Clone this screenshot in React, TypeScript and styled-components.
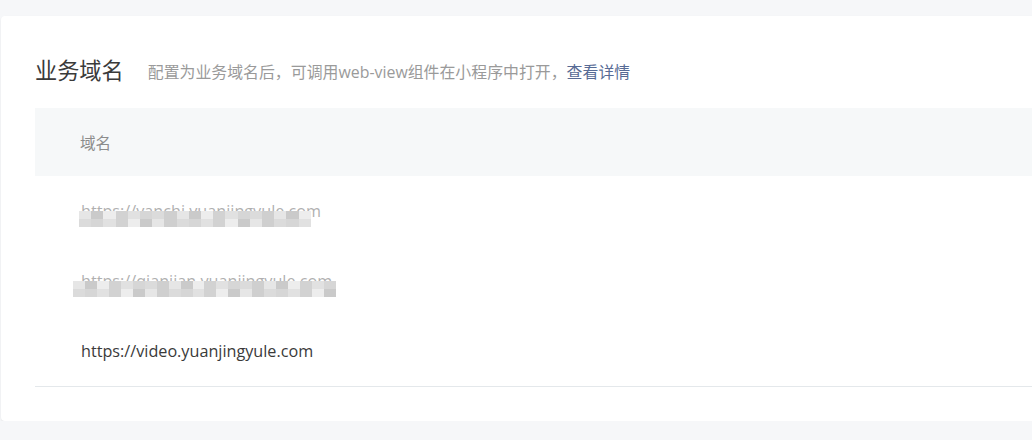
import styled, { createGlobalStyle } from 'styled-components';

const GlobalStyle = createGlobalStyle`
  html, body {
    margin: 0;
    padding: 0;
    background: #f6f7f9;
    overflow: hidden;
  }
  body {
    font-family: "Open Sans", "Noto Sans CJK SC", sans-serif;
    color: #353535;
  }
`;

const Page = styled.div`
  padding: 16px 0 0 1px;
  width: 1100px;
`;

const Card = styled.section`
  background: #fff;
  border-radius: 4px;
  box-shadow: 0 1px 2px rgba(0, 0, 0, 0.08);
  padding: 38px 0 34px 34px;
`;

const Heading = styled.div`
  display: flex;
  align-items: center;
  gap: 24px;
  height: 30px;
`;

const Title = styled.h2`
  margin: 0;
  font-family: "Noto Sans CJK SC", sans-serif;
  font-weight: 400;
  font-size: 22.2px;
  line-height: 30px;
  color: #3a3a3a;
`;

const Tip = styled.p`
  margin: 4px 0 0;
  font-family: "Open Sans", "Noto Sans CJK SC", sans-serif;
  font-size: 15.9px;
  color: #9a9a9a;
`;

const Link = styled.a`
  color: #576b95;
  text-decoration: none;
`;

const Table = styled.div`
  margin-top: 24px;
  border-bottom: 1px solid #e4e8eb;
`;

const HeadRow = styled.div`
  display: flex;
  align-items: center;
  height: 68px;
  padding-left: 45px;
  background: #f6f8f9;
  font-family: "Noto Sans CJK SC", sans-serif;
  font-size: 15.6px;
  color: #8c8c8c;
`;

const Row = styled.div`
  display: flex;
  align-items: center;
  height: 70px;
  padding-left: 46px;
`;

const Domain = styled.span<{ $masked?: boolean }>`
  position: relative;
  font-size: 16.2px;
  color: #3a3a3a;
  opacity: ${(p) => (p.$masked ? 0.4 : 1)};
`;

const Mosaic = styled.span<{ $left: number; $width: number }>`
  position: absolute;
  top: 11px;
  left: ${(p) => p.$left}px;
  width: ${(p) => p.$width}px;
  height: 16px;
  display: flex;
`;

const Cell = styled.i`
  flex: 1;
  display: flex;
  flex-direction: column;
`;

const Pixel = styled.b<{ $tone: string }>`
  flex: 1;
  background: ${(p) => p.$tone};
`;

const tones = ['#e6e6e6', '#d2d2d2', '#dbdbdb', '#cacaca', '#e1e1e1', '#cfcfcf', '#ededed', '#d6d6d6'];

function MaskedDomain({ text, left, width }: { text: string; left: number; width: number }) {
  const cells = Math.round(width / 12);
  return (
    <Domain>
      <Domain $masked>{text}</Domain>
      <Mosaic $left={left} $width={width}>
        {Array.from({ length: cells }).map((_, i) => (
          <Cell key={i}>
            <Pixel $tone={tones[(i * 3) % tones.length]} />
            <Pixel $tone={tones[(i * 5 + 2) % tones.length]} />
          </Cell>
        ))}
      </Mosaic>
    </Domain>
  );
}

export default function App() {
  return (
    <>
      <GlobalStyle />
      <Page>
        <Card>
          <Heading>
            <Title>业务域名</Title>
            <Tip>
              配置为业务域名后，可调用web-view组件在小程序中打开，<Link href="#">查看详情</Link>
            </Tip>
          </Heading>
          <Table>
            <HeadRow>域名</HeadRow>
            <Row>
              <MaskedDomain text="https://yanchi.yuanjingyule.com" left={-2} width={232} />
            </Row>
            <Row>
              <MaskedDomain text="https://qianjian.yuanjingyule.com" left={-8} width={263} />
            </Row>
            <Row>
              <Domain>https://video.yuanjingyule.com</Domain>
            </Row>
          </Table>
        </Card>
      </Page>
    </>
  );
}
